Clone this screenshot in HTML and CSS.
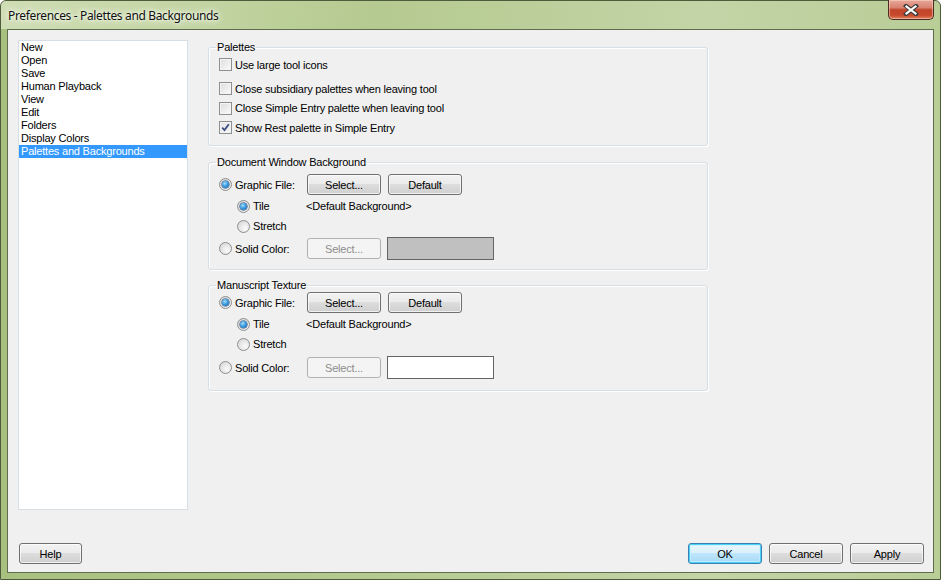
FILE: index.html
```html
<!DOCTYPE html>
<html>
<head>
<meta charset="utf-8">
<link rel="stylesheet" href="styles.css">
</head>
<body>
<div class="window">
  <div class="titlebar">
    <span class="title">Preferences - Palettes and Backgrounds</span>
    <div class="close">
      <svg width="16" height="12" viewBox="0 0 16 12">
        <path d="M3 2 L13 10 M13 2 L3 10" stroke="#3b3b3b" stroke-width="4.2" stroke-linecap="square"/>
        <path d="M3.5 2.5 L12.5 9.5 M12.5 2.5 L3.5 9.5" stroke="#ffffff" stroke-width="2.2" stroke-linecap="square"/>
      </svg>
    </div>
  </div>
  <div class="client">
    <div class="main">
      <ul class="list">
        <li>New</li>
        <li>Open</li>
        <li>Save</li>
        <li>Human Playback</li>
        <li>View</li>
        <li>Edit</li>
        <li>Folders</li>
        <li>Display Colors</li>
        <li class="selected">Palettes and Backgrounds</li>
      </ul>
      <div class="panel">
        <fieldset class="group g1">
          <legend>Palettes</legend>
          <div class="crow first"><span class="cb"></span><span>Use large tool icons</span></div>
          <div class="crow gap"><span class="cb"></span><span>Close subsidiary palettes when leaving tool</span></div>
          <div class="crow"><span class="cb"></span><span>Close Simple Entry palette when leaving tool</span></div>
          <div class="crow"><span class="cb checked"><svg width="11" height="11" viewBox="0 0 11 11"><path d="M2.2 5.6 L4.5 8 L8.8 2.2" fill="none" stroke="#3d4e85" stroke-width="1.8"/></svg></span><span>Show Rest palette in Simple Entry</span></div>
        </fieldset>

        <fieldset class="group g2">
          <legend>Document Window Background</legend>
          <div class="brow r1">
            <div class="opt lab"><span class="rb on"></span><span>Graphic File:</span></div>
            <button class="btn">Select...</button>
            <button class="btn">Default</button>
          </div>
          <div class="srow r2">
            <div class="opt sublab"><span class="rb on"></span><span>Tile</span></div>
            <span>&lt;Default Background&gt;</span>
          </div>
          <div class="srow">
            <div class="opt sublab"><span class="rb"></span><span>Stretch</span></div>
          </div>
          <div class="brow r4">
            <div class="opt lab"><span class="rb"></span><span>Solid Color:</span></div>
            <button class="btn disabled">Select...</button>
            <div class="swatch gray"></div>
          </div>
        </fieldset>

        <fieldset class="group g3">
          <legend>Manuscript Texture</legend>
          <div class="brow r1">
            <div class="opt lab"><span class="rb on"></span><span>Graphic File:</span></div>
            <button class="btn">Select...</button>
            <button class="btn">Default</button>
          </div>
          <div class="srow r2">
            <div class="opt sublab"><span class="rb on"></span><span>Tile</span></div>
            <span>&lt;Default Background&gt;</span>
          </div>
          <div class="srow">
            <div class="opt sublab"><span class="rb"></span><span>Stretch</span></div>
          </div>
          <div class="brow r4">
            <div class="opt lab"><span class="rb"></span><span>Solid Color:</span></div>
            <button class="btn disabled">Select...</button>
            <div class="swatch white"></div>
          </div>
        </fieldset>
      </div>
    </div>
    <div class="footer">
      <button class="btn help">Help</button>
      <div class="right">
        <button class="btn default">OK</button>
        <button class="btn">Cancel</button>
        <button class="btn">Apply</button>
      </div>
    </div>
  </div>
</div>
</body>
</html>
```

FILE: styles.css
```css
* { box-sizing: border-box; }
html, body { margin: 0; padding: 0; }
body {
  width: 941px;
  height: 580px;
  overflow: hidden;
  background: #ffffff;
  font-family: "Liberation Sans", Arial, sans-serif;
  font-size: 11px;
  color: #000;
}
.window {
  width: 941px;
  height: 580px;
  border: 1px solid #4e5c3c;
  border-radius: 6px 6px 0 0;
  background: linear-gradient(to right, #a8c07f 0%, #b5ca90 40%, #c3d4a6 75%, #b9cd97 100%);
  display: flex;
  flex-direction: column;
}
.titlebar {
  height: 28px;
  display: flex;
  align-items: flex-start;
  background: linear-gradient(100deg, rgba(240,246,226,0.55) 0%, rgba(230,240,210,0.35) 22%, rgba(255,255,255,0) 40%);
  border-radius: 5px 5px 0 0;
}
.title {
  font-family: "Noto Sans", "Open Sans", sans-serif;
  font-size: 12px;
  color: #101010;
  margin: 6px 0 0 7px;
  text-shadow: 0 0 6px #f4f8ea, 0 0 10px #eef4e0, 0 0 3px #ffffff;
  letter-spacing: -0.35px;
}
.close {
  margin-left: auto;
  margin-right: 6px;
  margin-top: -1px;
  width: 46px;
  height: 20px;
  border: 1px solid #4d2a22;
  border-top: none;
  border-radius: 0 0 5px 5px;
  background: linear-gradient(to bottom, #e7a99c 0%, #d8826f 40%, #c1452a 52%, #c8482c 80%, #e0835f 100%);
  box-shadow: inset 0 0 0 1px rgba(255,220,200,0.5);
  display: flex;
  align-items: center;
  justify-content: center;
}
.client {
  flex: 1;
  margin: 0 6px 6px 6px;
  border: 1px solid #5e6d4c;
  background: #f0f0f0;
  padding: 10px 9px 8px 10px;
  display: flex;
  flex-direction: column;
}
.main {
  height: 470px;
  display: flex;
  gap: 20px;
}
.list {
  list-style: none;
  margin: 0;
  padding: 0;
  width: 170px;
  height: 470px;
  background: #fff;
  border: 1px solid #d5dfe5;
}
.list li {
  height: 13px;
  line-height: 13px;
  padding-left: 2px;
  letter-spacing: -0.2px;
  white-space: nowrap;
}
.list li.selected {
  background: #3399ff;
  color: #fff;
}
.panel {
  width: 500px;
  display: flex;
  flex-direction: column;
}
.group {
  margin: 0;
  border: 1px solid #d5dfe5;
  border-radius: 3px;
  box-shadow: inset 1px 1px 0 #fff, 1px 1px 0 #fff;
  padding: 0 10px;
  min-width: 0;
}
.group legend {
  margin-left: -3px;
  padding: 0 1px;
  height: 14px;
  line-height: 14px;
  letter-spacing: -0.2px;
}
.g1 { padding-top: 1px; padding-bottom: 7.5px; }
.g2 { margin-top: 9px; padding-top: 5px; padding-bottom: 9px; }
.g3 { margin-top: 8px; padding-top: 0; padding-bottom: 11px; }

.crow {
  height: 19.5px;
  display: flex;
  align-items: center;
  gap: 3px;
  letter-spacing: -0.2px;
}
.crow.gap { margin-top: 4.5px; }

.cb {
  width: 13px;
  height: 13px;
  border: 1px solid #8e8f8f;
  background: linear-gradient(135deg, #dcdcdc 0%, #ececec 50%, #fbfbfb 100%);
  box-shadow: inset 0 0 0 1px #f4f4f4;
  display: flex;
  align-items: center;
  justify-content: center;
  flex: none;
}
.cb.checked { background: linear-gradient(135deg, #e4e4e4 0%, #f6f6f6 100%); }

.rb {
  width: 13px;
  height: 13px;
  border-radius: 50%;
  border: 1px solid #8e8f8f;
  background: radial-gradient(circle at 65% 65%, #fbfbfb 0%, #e6e6e6 50%, #d0d0d0 100%);
  flex: none;
  display: flex;
  align-items: center;
  justify-content: center;
}
.rb.on::after {
  content: "";
  width: 7px;
  height: 7px;
  border-radius: 50%;
  background: radial-gradient(circle at 40% 35%, #a6e0fb 0%, #3a9ce0 45%, #1a5aa0 100%);
  box-shadow: 0 0 0 0.5px #1b3c6a;
}

.opt {
  display: flex;
  align-items: center;
  gap: 3px;
  letter-spacing: -0.2px;
}
.opt.lab { width: 88px; flex: none; }
.opt.sublab { width: 69px; flex: none; }

.brow {
  height: 21px;
  display: flex;
  align-items: center;
}
.brow .btn + .btn { margin-left: 7px; }
.brow .btn + .swatch { margin-left: 6px; }
.srow {
  height: 20px;
  display: flex;
  align-items: center;
  padding-left: 18px;
  letter-spacing: -0.2px;
}
.srow.r2 { margin-top: 1px; }
.g2 .brow.r4 { margin-top: 1px; height: 23px; }
.g3 .brow.r4 { margin-top: 2px; height: 23px; }

.btn {
  font-family: "Liberation Sans", Arial, sans-serif;
  font-size: 11px;
  letter-spacing: -0.2px;
  color: #000;
  width: 74px;
  height: 21px;
  padding: 0;
  border: 1px solid #707070;
  border-radius: 3px;
  background: linear-gradient(to bottom, #f2f2f2 0%, #ebebeb 49%, #dddddd 50%, #cfcfcf 100%);
  box-shadow: inset 0 0 0 1px rgba(255,255,255,0.7);
}
.btn.disabled {
  color: #8d8d8d;
  border-color: #adb2b5;
  background: #f4f4f4;
  box-shadow: none;
}
.swatch {
  width: 107px;
  height: 23px;
  border: 1px solid #646464;
}
.swatch.gray { background: #c0c0c0; }
.swatch.white { background: #ffffff; }

.footer {
  margin-top: 33px;
  height: 21px;
  display: flex;
  align-items: center;
}
.btn.help { width: 63px; margin-left: 1px; }
.footer .right {
  margin-left: auto;
  display: flex;
  gap: 7px;
}
.btn.default {
  border-color: #3c7fb1;
  box-shadow: inset 0 0 0 1px #48d2f8, inset 0 0 0 2px rgba(200,240,255,0.6);
  background: linear-gradient(to bottom, #eaf6fd 0%, #d9f0fc 49%, #bee6fd 50%, #a7d9f5 100%);
}
```
